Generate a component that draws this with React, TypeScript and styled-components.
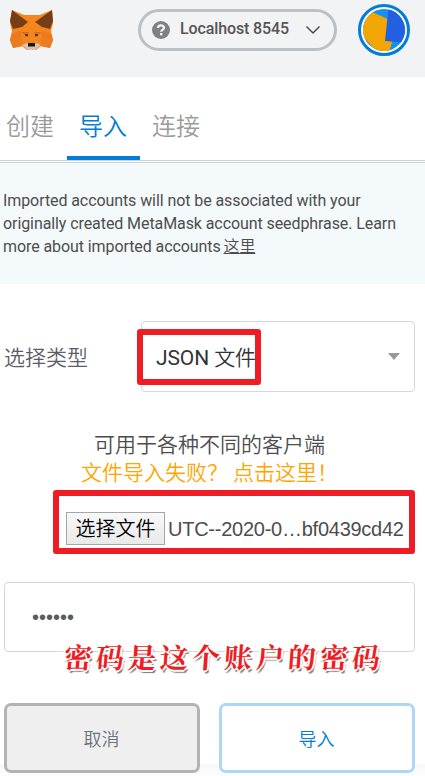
import React from 'react';
import styled, { createGlobalStyle } from 'styled-components';

const GlobalStyle = createGlobalStyle`
  *, *::before, *::after { box-sizing: border-box; }
  body {
    margin: 0;
    background: #fff;
    font-family: Roboto, 'Noto Sans CJK SC', sans-serif;
    color: #4d4d4d;
  }
`;

const Page = styled.div`
  width: 425px;
  height: 776px;
  overflow: hidden;
  display: flex;
  flex-direction: column;
  background: linear-gradient(#fff 764px, #f7f7f7 764px, #fdfdfd 776px);
`;

const Header = styled.header`
  flex: none;
  height: 77px;
  background: #f2f3f4;
  display: flex;
  align-items: flex-start;
  padding: 4px 15px 0 9px;
`;

const Logo = styled.svg`
  width: 45px;
  height: 42px;
  margin-top: 5px;
`;

const NetworkPill = styled.button`
  width: 199px;
  height: 42px;
  margin: 5px 0 0 84px;
  padding: 0 12px 2px 10px;
  border: 3px solid #bbc0c5;
  border-radius: 21px;
  background: transparent;
  display: flex;
  align-items: center;
  font: 500 16px Roboto, sans-serif;
  letter-spacing: -0.12px;
  color: #555;
`;

const NetworkName = styled.span`
  margin-top: -2px;
`;

const Help = styled.svg`
  width: 18px;
  height: 18px;
  margin: 1px 10px 0 1px;
`;

const Chevron = styled.svg`
  width: 16px;
  height: 10px;
  margin: 2px 1px 0 auto;
`;

const Avatar = styled.svg`
  width: 52px;
  height: 52px;
  margin-left: 21px;
`;

const Tabs = styled.nav`
  flex: none;
  height: 84px;
  display: flex;
  align-items: flex-end;
  border-bottom: 1px solid #cfd4db;
`;

const Tab = styled.div<{ $active?: boolean }>`
  width: 73px;
  height: 63px;
  padding: 13px 1px 0 0;
  text-align: center;
  font-size: 24px;
  line-height: 35px;
  font-weight: 350;
  color: ${(p) => (p.$active ? '#037dd6' : '#9b9b9b')};
  border-bottom: 4px solid ${(p) => (p.$active ? '#037dd6' : 'transparent')};
  &:first-child {
    width: 67px;
    padding-right: 7px;
  }
`;

const Disclaimer = styled.p`
  flex: none;
  height: 122px;
  margin: 1px 0 0;
  padding: 26px 0 0 3px;
  border-top: 1px solid #cfd4db;
  background: #f4f9fc;
  font-size: 16px;
  letter-spacing: -0.085px;
  line-height: 23px;
  white-space: nowrap;
`;

const DisclaimerLink = styled.a`
  margin-left: -1px;
  font-weight: 350;
  text-decoration: underline;
`;

const TypeRow = styled.div`
  flex: none;
  height: 71px;
  margin: 37px 10px 0 4px;
  display: flex;
  align-items: center;
`;

const TypeLabel = styled.label`
  width: 137px;
  padding-bottom: 2px;
  font-size: 21px;
  font-weight: 350;
  color: #5b5d67;
`;

const Select = styled.div`
  position: relative;
  flex: 1;
  height: 71px;
  padding: 0 14px;
  border: 1px solid #d2d8dd;
  border-radius: 4px;
  display: flex;
  align-items: center;
  justify-content: space-between;
  font-size: 21px;
  color: #333;
`;

const SelectValue = styled.span`
  padding-bottom: 2px;
  letter-spacing: -0.1px;
`;

const CjkText = styled.span`
  font-weight: 350;
`;

const Caret = styled.span`
  border: 6px solid transparent;
  border-top: 7px solid #999;
  border-bottom: 0;
`;

const Highlight = styled.span<{ $width: number; $height: number }>`
  position: absolute;
  left: -5px;
  top: 7px;
  width: ${(p) => p.$width}px;
  height: ${(p) => p.$height}px;
  border: 6px solid #ee1c25;
  border-radius: 3px;
`;

const HelpText = styled.div`
  flex: none;
  margin: 39px 6px 0 0;
  text-align: center;
  font-size: 21px;
  line-height: 28px;
  font-weight: 350;
`;

const HelpLink = styled.a`
  display: block;
  white-space: nowrap;
  line-height: 28px;
  color: #ffa500;
`;

const FilePicker = styled.div`
  flex: none;
  width: 362px;
  height: 64px;
  margin: 3px 0 0 53px;
  padding: 12px 0 0 7px;
  border: 6px solid #ee1c25;
  border-radius: 3px;
  display: flex;
  align-items: center;
  gap: 3px;
  font: 20px 'Liberation Sans', Arial, sans-serif;
  letter-spacing: -0.25px;
  white-space: nowrap;
`;

const FileButton = styled.button`
  flex: none;
  width: 99px;
  height: 33px;
  padding: 0;
  border: 1px solid #a6a6a6;
  background: linear-gradient(#f8f8f8, #e9e9e9);
  font: 350 20px 'Noto Sans CJK SC', sans-serif;
  line-height: 30px;
  color: #000;
`;

const FileName = styled.span`
  padding-top: 2px;
`;

const PasswordField = styled.div`
  position: relative;
  flex: none;
  height: 70px;
  margin: 28px 10px 0 4px;
  padding-left: 27px;
  border: 1px solid #d2d8dd;
  border-radius: 4px;
  display: flex;
  align-items: center;
`;

const Dots = styled.span`
  font: 20px 'Liberation Sans', Arial, sans-serif;
  color: #5b5b5b;
`;

const Annotation = styled.span`
  position: absolute;
  left: 59px;
  top: 53px;
  font: 700 28px/40px 'Noto Serif CJK SC', 'Noto Sans CJK SC', serif;
  letter-spacing: 4px;
  white-space: nowrap;
  color: #ee1c25;
  transform: skewX(-4deg);
  text-shadow: -2px 0 #fff, 2px 0 #fff, 0 -2px #fff, 0 2px #fff, -1px -1px #fff,
    1px 1px #fff, 2px 3px 1px #777;
`;

const Actions = styled.div`
  flex: none;
  margin: 51px 10px 0 4px;
  display: flex;
  gap: 19px;
`;

const ActionButton = styled.button<{ $primary?: boolean }>`
  flex: 1;
  height: 70px;
  padding: 0 1px 1px 0;
  border: 3px solid ${(p) => (p.$primary ? '#aed7f3' : '#b3b3b3')};
  border-radius: 7px;
  background: ${(p) => (p.$primary ? '#fff' : '#efefef')};
  color: ${(p) => (p.$primary ? '#037dd6' : '#6a737d')};
  font: 350 18px 'Noto Sans CJK SC', sans-serif;
`;

function Fox() {
  return (
    <Logo viewBox="0 0 45 42" aria-label="MetaMask">
      <path fill="#f6851b" d="M3 1 15 6H31L43 1 44 14 42 22 44 31 41 39 32 37 27 41H18L13 37 4 39 1 31 3 22 1 14Z" />
      <path fill="#763d16" d="M3 1 19 13 13 18 4 20 1 12ZM43 1 26 13 33 18 41 20 44 12Z" />
      <path fill="#ec7d1e" d="M1 31 13 29 14 37 4 39ZM44 31 32 29 31 37 41 39Z" />
      <path fill="#ea791f" d="M3 25 12 22 12 29 1 31ZM42 25 33 22 33 29 44 31Z" />
      <path fill="#dd6b1d" d="M12 23 20 23 19 28ZM33 23 25 23 26 28Z" />
      <path fill="#d7c1b3" d="M13 36 18 34H27L32 36 26 41H19Z" />
      <path fill="#3c4550" d="M16 25 19 25 19 27.5 16 27ZM29 25 26 25 26 27.5 29 27Z" />
      <path fill="#161616" d="M19 34H26V37.5H19Z" />
    </Logo>
  );
}

function Identicon() {
  return (
    <Avatar viewBox="0 0 52 52">
      <defs>
        <clipPath id="avatarClip">
          <circle cx="26" cy="26" r="21" />
        </clipPath>
      </defs>
      <circle cx="26" cy="26" r="24.5" fill="#fff" stroke="#037dd6" strokeWidth="3" />
      <g clipPath="url(#avatarClip)">
        <path fill="#1890ef" d="M0 0H52V52H0Z" />
        <path fill="#fa7900" d="M0 26 20 52H0Z" />
        <path fill="#f2a604" d="M0 2 30 15 35 35 30 52 19 48 0 27Z" />
        <path fill="#235fe1" d="M31 0H52V39L27 37Z" />
      </g>
    </Avatar>
  );
}

export default function App() {
  return (
    <>
      <GlobalStyle />
      <Page>
        <Header>
          <Fox />
          <NetworkPill>
            <Help viewBox="0 0 18 18">
              <circle cx="9" cy="9" r="9" fill="#7f8082" />
              <path d="M5.9 7C6 3.7 12 3.5 12 6.8c0 2.1-2.8 2-2.8 4" fill="none" stroke="#f2f3f4" strokeWidth="2.3" />
              <path d="M8 12h2.4v2.3H8Z" fill="#f2f3f4" />
            </Help>
            <NetworkName>Localhost 8545</NetworkName>
            <Chevron viewBox="0 0 16 10">
              <path d="M1.5 1.5 8 8 14.5 1.5" fill="none" stroke="#4d4d4d" strokeWidth="1.5" />
            </Chevron>
          </NetworkPill>
          <Identicon />
        </Header>
        <Tabs>
          <Tab>创建</Tab>
          <Tab $active>导入</Tab>
          <Tab>连接</Tab>
        </Tabs>
        <Disclaimer>
          Imported accounts will not be associated with your
          <br />
          originally created MetaMask account seedphrase. Learn
          <br />
          more about imported accounts <DisclaimerLink>这里</DisclaimerLink>
        </Disclaimer>
        <TypeRow>
          <TypeLabel>选择类型</TypeLabel>
          <Select>
            <SelectValue>
              JSON <CjkText>文件</CjkText>
            </SelectValue>
            <Caret />
            <Highlight $width={124} $height={56} />
          </Select>
        </TypeRow>
        <HelpText>
          可用于各种不同的客户端
          <HelpLink>文件导入失败？ 点击这里！</HelpLink>
        </HelpText>
        <FilePicker>
          <FileButton>选择文件</FileButton>
          <FileName>UTC--2020-0…bf0439cd42</FileName>
        </FilePicker>
        <PasswordField>
          <Dots>••••••</Dots>
          <Annotation>密码是这个账户的密码</Annotation>
        </PasswordField>
        <Actions>
          <ActionButton>取消</ActionButton>
          <ActionButton $primary>导入</ActionButton>
        </Actions>
      </Page>
    </>
  );
}
